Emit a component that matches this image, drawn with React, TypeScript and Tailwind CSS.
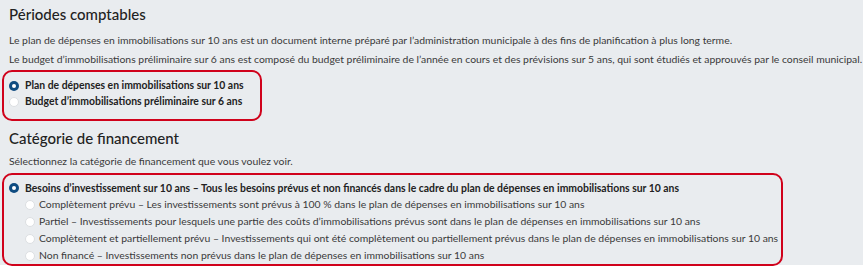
const font = { fontFamily: 'Lato, "Liberation Sans", sans-serif' };

function Radio({ checked }: { checked?: boolean }) {
  return checked ? (
    <span className="w-[10px] h-[10px] rounded-full bg-[#0f4c81] flex items-center justify-center shrink-0">
      <span className="w-[4px] h-[4px] rounded-full bg-white" />
    </span>
  ) : (
    <span className="w-[10px] h-[10px] rounded-full bg-white border border-[#dcdfe2] shrink-0" />
  );
}

const subOptions = [
  'Complètement prévu – Les investissements sont prévus à 100 % dans le plan de dépenses en immobilisations sur 10 ans',
  'Partiel – Investissements pour lesquels une partie des coûts d’immobilisations prévus sont dans le plan de dépenses en immobilisations sur 10 ans',
  'Complètement et partiellement prévu – Investissements qui ont été complètement ou partiellement prévus dans le plan de dépenses en immobilisations sur 10 ans',
  'Non financé – Investissements non prévus dans le plan de dépenses en immobilisations sur 10 ans',
];

export default function App() {
  return (
    <div style={font} className="w-[863px] h-[270px] bg-white overflow-hidden">
      <div className="bg-[#e9ecef] h-[265px] pl-[9px] pt-[3px] text-[#3a3a3a]">
        <h2 className="text-[15px] leading-[22px] text-[#222] font-medium">Périodes comptables</h2>
        <p className="text-[10.4px] leading-[19px] mt-[6px] whitespace-nowrap">
          Le plan de dépenses en immobilisations sur 10 ans est un document interne préparé par l’administration municipale à des fins de planification à plus long terme.
        </p>
        <p className="text-[10.4px] leading-[19px] whitespace-nowrap">
          Le budget d’immobilisations préliminaire sur 6 ans est composé du budget préliminaire de l’année en cours et des prévisions sur 5 ans, qui sont étudiés et approuvés par le conseil municipal.
        </p>

        {/* Accounting period */}
        <div className="ml-[-7px] mt-[1px] w-[260px] h-[51px] border-2 border-[#d0021b] rounded-[10px] pl-[5px] pt-[6px] flex flex-col">
          <label className="flex items-center gap-[6px] h-[16px] text-[10.4px] font-bold text-[#222] whitespace-nowrap">
            <Radio checked />
            Plan de dépenses en immobilisations sur 10 ans
          </label>
          <label className="flex items-center gap-[6px] h-[16px] text-[10.4px] font-bold text-[#222] whitespace-nowrap">
            <Radio />
            Budget d’immobilisations préliminaire sur 6 ans
          </label>
        </div>

        <h2 className="text-[15px] leading-[22px] text-[#222] font-medium mt-[6px]">Catégorie de financement</h2>
        <p className="text-[10.4px] leading-[19px] mt-[3px]">Sélectionnez la catégorie de financement que vous voulez voir.</p>

        {/* Funding category */}
        <div className="ml-[-7px] mt-[2px] w-[781px] h-[93px] border-2 border-[#d0021b] rounded-[10px] pl-[5px] pt-[5px] flex flex-col">
          <label className="flex items-center gap-[6px] h-[16.8px] text-[10.4px] font-bold text-[#222] whitespace-nowrap">
            <Radio checked />
            Besoins d’investissement sur 10 ans – Tous les besoins prévus et non financés dans le cadre du plan de dépenses en immobilisations sur 10 ans
          </label>
          {subOptions.map((t) => (
            <label key={t} className="flex items-center gap-[4px] h-[16.8px] pl-[16px] text-[10.4px] whitespace-nowrap">
              <Radio />
              {t}
            </label>
          ))}
        </div>
      </div>
    </div>
  );
}
